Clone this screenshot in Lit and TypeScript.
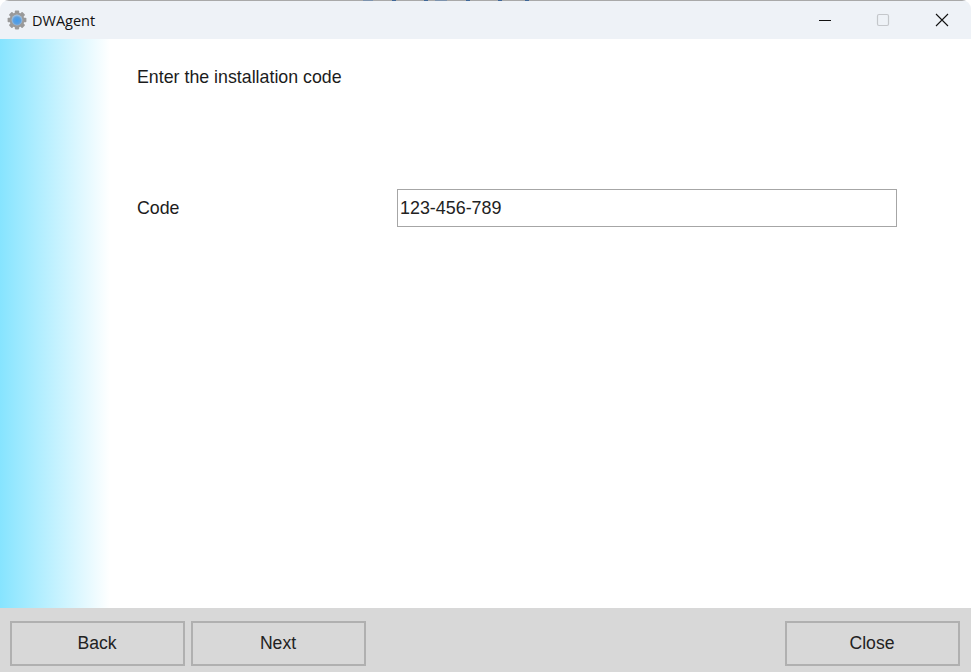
import { LitElement, html, css, svg } from "lit";
import { customElement } from "lit/decorators.js";

const teeth = [0, 45, 90, 135, 180, 225, 270, 315];

@customElement("app-root")
export class AppRoot extends LitElement {
  static styles = css`
    :host {
      display: block;
      width: 971px;
      height: 672px;
      background: #ffffff;
      font-family: "Liberation Sans", Arial, sans-serif;
      color: #1c1c1c;
      overflow: hidden;
    }
    .window {
      height: 672px;
      display: flex;
      flex-direction: column;
    }
    .titlebar {
      height: 39px;
      flex: none;
      box-sizing: border-box;
      background: #eef2f7;
      border-radius: 9px 9px 0 0;
      display: flex;
      flex-direction: column;
      overflow: hidden;
    }
    .edge {
      height: 1px;
      flex: none;
      background:
        linear-gradient(
          90deg,
          #a9a9a9 363px,
          #7d93ad 363px,
          #7d93ad 373px,
          #a9a9a9 373px,
          #a9a9a9 392px,
          #3f6797 392px,
          #3f6797 396px,
          #a9a9a9 396px,
          #a9a9a9 424px,
          #3f6797 424px,
          #3f6797 428px,
          #a9a9a9 428px,
          #a9a9a9 435px,
          #7d93ad 435px,
          #7d93ad 447px,
          #a9a9a9 447px,
          #a9a9a9 466px,
          #3f6797 466px,
          #3f6797 470px,
          #a9a9a9 470px,
          #a9a9a9 498px,
          #3f6797 498px,
          #3f6797 502px,
          #a9a9a9 502px,
          #a9a9a9 525px,
          #3f6797 525px,
          #3f6797 529px,
          #a9a9a9 529px
        );
    }
    .bar {
      flex: 1;
      display: flex;
      align-items: center;
      padding-left: 7px;
      padding-bottom: 1px;
    }
    .app-icon {
      width: 20px;
      height: 20px;
      flex: none;
      display: block;
    }
    .title {
      margin-left: 5px;
      font-family: "Open Sans", "Noto Sans", sans-serif;
      font-size: 14.5px;
      color: #111111;
      flex: 1;
    }
    .controls {
      display: flex;
      align-items: center;
    }
    .control {
      width: 58.5px;
      height: 38px;
      display: flex;
      align-items: center;
      justify-content: center;
    }
    .control svg {
      width: 14px;
      height: 14px;
      display: block;
    }
    .main {
      flex: 1;
      display: flex;
      min-height: 0;
    }
    .stripe {
      width: 110px;
      flex: none;
      background: linear-gradient(90deg, #86e4ff 0%, #ffffff 100%);
    }
    .content {
      flex: 1;
      padding: 28px 74px 0 27px;
      display: flex;
      flex-direction: column;
      font-size: 17.8px;
    }
    .heading {
      line-height: 20px;
    }
    .row {
      margin-top: 102px;
      display: flex;
      align-items: center;
    }
    .label {
      width: 260px;
      flex: none;
    }
    .input {
      width: 500px;
      height: 38px;
      box-sizing: border-box;
      border: 1px solid #a6a6a6;
      padding: 0 2px;
      display: flex;
      align-items: center;
      font-size: 17.9px;
      color: #222222;
      background: #ffffff;
    }
    .footer {
      height: 64px;
      flex: none;
      box-sizing: border-box;
      background: #d8d8d8;
      padding: 13px 11px 6px 10px;
      display: flex;
      gap: 6px;
    }
    .btn {
      width: 175px;
      height: 45px;
      box-sizing: border-box;
      border: 2px solid #b0b0b0;
      background: #d8d8d8;
      display: flex;
      align-items: center;
      justify-content: center;
      font-size: 17.6px;
      color: #222222;
      padding-right: 1px;
    }
    .spacer {
      flex: 1;
    }
  `;

  private icon() {
    return html`<svg class="app-icon" viewBox="0 0 20 20" aria-hidden="true">
      <defs>
        <radialGradient id="core" cx="50%" cy="55%" r="55%">
          <stop offset="0%" stop-color="#3f9cf0"></stop>
          <stop offset="60%" stop-color="#5f9fdc"></stop>
          <stop offset="100%" stop-color="#b3cbe2"></stop>
        </radialGradient>
      </defs>
      ${teeth.map(
        (a) => svg`<rect x="7.8" y="0.6" width="4.4" height="4" rx="0.8" fill="#999999" transform="rotate(${a} 10 10)"></rect>`
      )}
      <circle cx="10" cy="10" r="7.4" fill="#9a9a9a"></circle>
      <circle cx="10" cy="10" r="5.4" fill="url(#core)"></circle>
    </svg>`;
  }

  render() {
    return html`<div class="window">
      <header class="titlebar">
        <div class="edge"></div>
        <div class="bar">
          ${this.icon()}
          <span class="title">DWAgent</span>
          <div class="controls">
            <div class="control">
              <svg viewBox="0 0 14 14"><path d="M1 7.5H13" stroke="#111" stroke-width="1" fill="none"></path></svg>
            </div>
            <div class="control">
              <svg viewBox="0 0 14 14"><rect x="1.5" y="1.5" width="11" height="11" rx="1.5" stroke="#c4c7cb" stroke-width="1.2" fill="none"></rect></svg>
            </div>
            <div class="control">
              <svg viewBox="0 0 14 14"><path d="M1 1L13 13M13 1L1 13" stroke="#111" stroke-width="1.1" fill="none"></path></svg>
            </div>
          </div>
        </div>
      </header>
      <div class="main">
        <div class="stripe"></div>
        <div class="content">
          <div class="heading">Enter the installation code</div>
          <div class="row">
            <div class="label">Code</div>
            <div class="input">123-456-789</div>
          </div>
        </div>
      </div>
      <footer class="footer">
        <div class="btn">Back</div>
        <div class="btn">Next</div>
        <div class="spacer"></div>
        <div class="btn">Close</div>
      </footer>
    </div>`;
  }
}
